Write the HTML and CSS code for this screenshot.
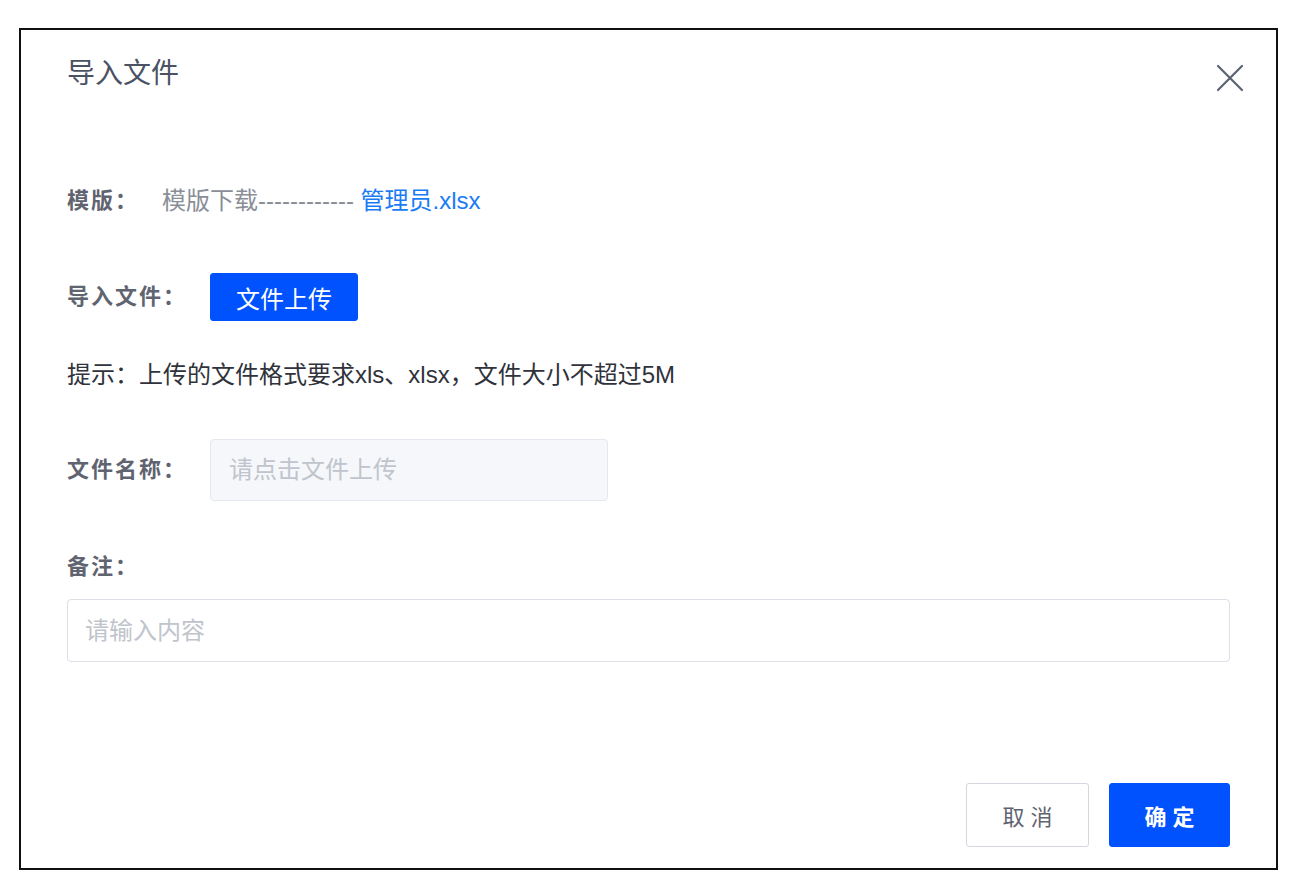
FILE: index.html
```html
<!DOCTYPE html>
<html lang="zh-CN">
<head>
<meta charset="utf-8">
<title>导入文件</title>
<link rel="stylesheet" href="styles.css">
</head>
<body>
<div class="dialog">
  <div class="dialog-header">
    <div class="dialog-title">导入文件</div>
    <button class="close-btn" aria-label="关闭">
      <svg width="28" height="28" viewBox="0 0 28 28"><path d="M2 2 L26 26 M26 2 L2 26" stroke="#5b6271" stroke-width="2.2" fill="none" stroke-linecap="round"/></svg>
    </button>
  </div>
  <div class="dialog-body">
    <div class="row row-template">
      <span class="label">模版：</span>
      <span class="value">模版下载------------ <a class="link" href="#">管理员.xlsx</a></span>
    </div>
    <div class="row row-upload">
      <span class="label">导入文件：</span>
      <button class="btn btn-primary btn-upload">文件上传</button>
    </div>
    <div class="hint">提示：上传的文件格式要求xls、xlsx，文件大小不超过5M</div>
    <div class="row row-filename">
      <span class="label">文件名称：</span>
      <input class="input input-disabled" placeholder="请点击文件上传" disabled>
    </div>
    <div class="label remark-label">备注：</div>
    <input class="input input-remark" placeholder="请输入内容">
  </div>
  <div class="dialog-footer">
    <button class="btn btn-default btn-footer">取 消</button>
    <button class="btn btn-primary btn-footer btn-confirm">确 定</button>
  </div>
</div>
</body>
</html>
```
FILE: styles.css
```css
* { box-sizing: border-box; }
html, body { margin: 0; padding: 0; background: #fff; }
body {
  font-family: "Liberation Sans", "Noto Sans CJK SC", sans-serif;
  padding: 28px 0 0 19px;
}
.dialog {
  width: 1259px;
  height: 842px;
  border: 2px solid #111;
  background: #fff;
  padding: 0 46px;
  display: flex;
  flex-direction: column;
}
.dialog-header {
  display: flex;
  justify-content: space-between;
  align-items: flex-start;
  padding-top: 26px;
  height: 62px;
}
.dialog-title {
  font-size: 28px;
  line-height: 36px;
  color: #4a5264;
}
.close-btn {
  border: 0;
  background: transparent;
  padding: 0;
  margin: 8px -14px 0 0;
  width: 28px;
  height: 28px;
  cursor: pointer;
  display: flex;
}
.dialog-body {
  display: flex;
  flex-direction: column;
  padding-top: 85px;
}
.row {
  display: flex;
  align-items: center;
}
.label {
  font-size: 22px;
  font-weight: bold;
  color: #5f6470;
  margin-right: 23px;
  line-height: 32px;
  letter-spacing: 2px;
}
.row-template { height: 48px; }
.value {
  font-size: 24px;
  color: #8a8e97;
  line-height: 32px;
}
.link {
  color: #1a7cf4;
  text-decoration: none;
}
.row-upload { height: 48px; margin-top: 48px; }
.btn {
  font-family: "Liberation Sans", "Noto Sans CJK SC", sans-serif;
  border-radius: 3px;
  cursor: pointer;
}
.btn-primary {
  background: #0052ff;
  border: 1px solid #0052ff;
  color: #fff;
}
.btn-upload {
  width: 148px;
  height: 48px;
  font-size: 24px;
  padding: 0;
}
.hint {
  margin-top: 38px;
  font-size: 24px;
  line-height: 32px;
  color: #30333b;
}
.row-filename { margin-top: 48px; height: 62px; }
.input {
  font-family: "Liberation Sans", "Noto Sans CJK SC", sans-serif;
  font-size: 24px;
  border: 1px solid #dcdfe6;
  border-radius: 4px;
  outline: none;
  background: #fff;
}
.input::placeholder { color: #c0c4cc; }
.input-disabled {
  width: 398px;
  height: 62px;
  padding: 0 18px;
  background: #f5f7fa;
  border-color: #e4e7ed;
}
.remark-label { margin-top: 50px; }
.input-remark {
  margin-top: 16px;
  width: 100%;
  height: 63px;
  padding: 0 17px;
}
.dialog-footer {
  display: flex;
  justify-content: flex-end;
  gap: 20px;
  margin-top: 121px;
}
.btn-footer {
  height: 64px;
  font-size: 22px;
  padding: 0;
}
.btn-default {
  width: 123px;
  background: #fff;
  border: 1px solid #d4d7de;
  color: #5f6470;
}
.btn-confirm {
  width: 121px;
  font-weight: bold;
}
```
